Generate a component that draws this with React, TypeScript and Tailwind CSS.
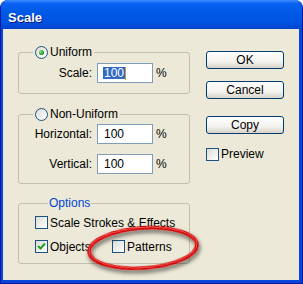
import React from "react";

const font = "font-['Liberation_Sans',Arial,sans-serif]";

function Radio({ checked = false }: { checked?: boolean }) {
	return (
		<span className="w-[13px] h-[13px] rounded-full border border-[#1c5180] bg-[linear-gradient(135deg,#dcdcd7,#ffffff)] flex items-center justify-center shrink-0">
			{checked && (
				<span className="w-[5px] h-[5px] rounded-full bg-[radial-gradient(circle_at_35%_35%,#8ee08e,#21a121_60%,#168016)]" />
			)}
		</span>
	);
}

function Check({ checked = false }: { checked?: boolean }) {
	return (
		<span className="w-[13px] h-[13px] border border-[#1c5180] bg-[linear-gradient(135deg,#dcdcd7,#ffffff)] flex items-center justify-center shrink-0">
			{checked && (
				<svg width="9" height="9" viewBox="0 0 9 9">
					<path d="M1 4 L3.5 6.5 L8 1.5" fill="none" stroke="#21a121" strokeWidth="2" />
				</svg>
			)}
		</span>
	);
}

function Field({ label, selected = false }: { label: string; selected?: boolean }) {
	return (
		<div className="flex items-center">
			<span className="w-[73px] text-right leading-[14px]">{label}</span>
			<div className="ml-[5px] w-[56px] h-[20px] border border-[#7f9db9] bg-white flex items-center pl-[5px]">
				{selected ? (
					<>
						<span className="bg-[#316ac5] text-white h-[12px] leading-[12px] px-[1px]">100</span>
						<span className="w-[1px] h-[13px] bg-[#ce953a]" />
					</>
				) : (
					<span className="leading-[14px] pl-[1px]">100</span>
				)}
			</div>
			<span className="ml-[3px] leading-[14px]">%</span>
		</div>
	);
}

function Button({ children }: { children: React.ReactNode }) {
	return (
		<div className="w-[78px] h-[18px] rounded-[3px] border border-[#003c74] bg-[linear-gradient(to_bottom,#ffffff,#f3f2ee_60%,#d8d3c8)] flex items-center justify-center leading-[14px]">
			{children}
		</div>
	);
}

export default function App() {
	return (
		<div className={`relative w-[303px] h-[284px] flex flex-col rounded-t-[8px] overflow-hidden bg-[#0845d8] border-x border-b border-[#0019a0] text-[12px] text-black ${font}`}>
			<div className="h-[29px] -mx-[1px] shrink-0 bg-[linear-gradient(to_bottom,#3d8fff_0%,#0a62f2_12%,#0058e6_45%,#0054e2_75%,#0043cc_100%)] pl-[8px] pt-[9px]">
				<span className="text-white font-bold text-[13px] leading-[15px] [text-shadow:1px_1px_0_#0a1a80]">Scale</span>
			</div>
			<div className="flex-1 ml-[2px] mr-[3px] mb-[3px] bg-[#ece9d8] flex items-start pl-[15px] pt-[16px]">
				<div className="w-[172px] flex flex-col">
					<fieldset className="border border-[#c3c0ad] rounded-[3px] pb-[10px]">
						<legend className="ml-[14px] px-[2px]">
							<span className="flex items-center gap-[2px] h-[14px]">
								<Radio checked />
								<span>Uniform</span>
							</span>
						</legend>
						<div className="mt-[4px]">
							<Field label="Scale:" selected />
						</div>
					</fieldset>

					<fieldset className="mt-[13px] border border-[#c3c0ad] rounded-[3px] pb-[9px]">
						<legend className="ml-[14px] px-[2px]">
							<span className="flex items-center gap-[2px] h-[14px]">
								<Radio />
								<span>Non-Uniform</span>
							</span>
						</legend>
						<div className="mt-[3px]">
							<Field label="Horizontal:" />
						</div>
						<div className="mt-[10px]">
							<Field label="Vertical:" />
						</div>
					</fieldset>

					<fieldset className="mt-[12px] border border-[#c3c0ad] rounded-[3px] pb-[10px] pl-[16px]">
						<legend className="ml-[13px] px-[1px]">
							<span className="flex items-center h-[14px] text-[#0046d5]">Options</span>
						</legend>
						<div className="mt-[6px] flex items-center gap-[2px] h-[13px]">
							<Check />
							<span>Scale Strokes &amp; Effects</span>
						</div>
						<div className="mt-[11px] flex items-center h-[13px]">
							<div className="w-[77px] flex items-center gap-[2px]">
								<Check checked />
								<span>Objects</span>
							</div>
							<div className="flex items-center gap-[2px]">
								<Check />
								<span>Patterns</span>
							</div>
						</div>
					</fieldset>
				</div>

				<div className="ml-[16px] mt-[6px] w-[78px] flex flex-col">
					<Button>OK</Button>
					<div className="mt-[12px]">
						<Button>Cancel</Button>
					</div>
					<div className="mt-[17px]">
						<Button>Copy</Button>
					</div>
					<div className="mt-[11px] flex items-center gap-[2px]">
						<Check />
						<span>Preview</span>
					</div>
				</div>
			</div>

			<svg className="absolute left-[83px] top-[219px]" width="124" height="60" viewBox="0 0 124 60">
				<defs>
					<filter id="sh" x="-20%" y="-30%" width="140%" height="170%">
						<feDropShadow dx="1" dy="3" stdDeviation="2" floodColor="#000" floodOpacity="0.65" />
					</filter>
				</defs>
				<g transform="rotate(-4 59 29)" filter="url(#sh)">
					<ellipse cx="59" cy="29" rx="54" ry="20" fill="none" stroke="#d20000" strokeWidth="3.5" />
					<ellipse cx="59" cy="28.5" rx="54" ry="20" fill="none" stroke="#ff6a6a" strokeWidth="0.8" />
				</g>
			</svg>
		</div>
	);
}
